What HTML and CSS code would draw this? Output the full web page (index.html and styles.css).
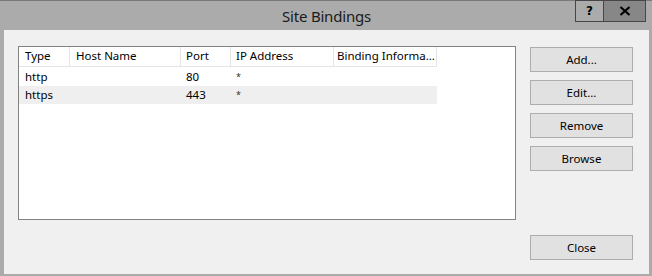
FILE: index.html
```html
<!DOCTYPE html>
<html>
<head>
<meta charset="utf-8">
<link rel="stylesheet" href="styles.css">
</head>
<body>
<div class="window">
  <div class="titlebar">
    <div class="title">Site Bindings</div>
    <div class="caption-buttons">
      <div class="cap-btn help">?</div>
      <div class="cap-btn close">
        <svg width="12" height="10" viewBox="0 0 12 10"><path d="M1.5 1 L10.5 9 M10.5 1 L1.5 9" stroke="#000" stroke-width="2.2"/></svg>
      </div>
    </div>
  </div>
  <div class="client">
    <div class="listview">
      <div class="row header">
        <div class="cell c1">Type</div>
        <div class="cell c2">Host Name</div>
        <div class="cell c3">Port</div>
        <div class="cell c4">IP Address</div>
        <div class="cell c5">Binding Informa...</div>
      </div>
      <div class="row item">
        <div class="cell c1">http</div>
        <div class="cell c2"></div>
        <div class="cell c3">80</div>
        <div class="cell c4"><span class="star">*</span></div>
        <div class="cell c5"></div>
      </div>
      <div class="row item alt">
        <div class="cell c1">https</div>
        <div class="cell c2"></div>
        <div class="cell c3">443</div>
        <div class="cell c4"><span class="star">*</span></div>
        <div class="cell c5"></div>
      </div>
    </div>
    <div class="buttons">
      <div class="btn-group">
        <button class="btn">Add...</button>
        <button class="btn">Edit...</button>
        <button class="btn">Remove</button>
        <button class="btn">Browse</button>
      </div>
      <button class="btn">Close</button>
    </div>
  </div>
</div>
</body>
</html>
```
FILE: styles.css
```css
html, body {
  margin: 0;
  padding: 0;
  background: #ababab;
}
body {
  font-family: "Noto Sans", "Open Sans", sans-serif;
  font-size: 11.5px;
  color: #000;
}
.window {
  width: 652px;
  height: 276px;
  box-sizing: border-box;
  background: #ababab;
  border-top: 1px solid #7a7a7a;
  padding: 0 3px 2px 4px;
  display: flex;
  flex-direction: column;
}
.titlebar {
  height: 29px;
  position: relative;
  display: flex;
  justify-content: center;
  align-items: center;
}
.title {
  font-size: 15px;
  color: #1a1a1a;
  margin-top: 1px;
  letter-spacing: -0.2px;
}
.caption-buttons {
  position: absolute;
  right: 3px;
  top: -1px;
  display: flex;
}
.cap-btn {
  height: 20px;
  box-sizing: content-box;
  border: 1px solid #474747;
  display: flex;
  align-items: center;
  justify-content: center;
  font-weight: bold;
  font-family: "DejaVu Sans", sans-serif;
  font-size: 12px;
}
.cap-btn.help {
  width: 27px;
  background: #ababab;
  border-right: none;
}
.cap-btn.close {
  width: 41px;
  background: #878787;
}
.client {
  flex: 1;
  background: #f0f0f0;
  display: flex;
  padding: 16px 16px 14px 14px;
  gap: 14px;
}
.listview {
  width: 496px;
  height: 172px;
  background: #fff;
  border: 1px solid #828282;
}
.row {
  display: flex;
  width: 418px;
}
.cell {
  box-sizing: border-box;
  white-space: nowrap;
  overflow: hidden;
}
.c1 { width: 51px; }
.c2 { width: 111px; }
.c3 { width: 50px; }
.c4 { width: 103px; }
.c5 { width: 103px; }
.header {
  height: 19px;
  border-bottom: 1px solid #e5e5e5;
  line-height: 18px;
}
.header .cell {
  border-right: 1px solid #e5e5e5;
  padding-left: 6px;
}
.header .c3 { padding-left: 5px; }
.header .c4 { padding-left: 5px; }
.header .c5 { padding-left: 3px; }
.item {
  height: 18px;
  line-height: 18px;
}
.item.alt { background: #efefef; }
.item .cell { padding-left: 6px; }
.item .c3 { padding-left: 5px; }
.item .c4 { padding-left: 5px; }
.star {
  font-size: 9px;
  vertical-align: 2px;
  color: #333;
}
.header + .item { margin-top: 1px; }
.buttons {
  display: flex;
  flex-direction: column;
  justify-content: space-between;
  padding-top: 1px;
}
.btn-group {
  display: flex;
  flex-direction: column;
  gap: 8px;
}
.btn {
  width: 103px;
  height: 25px;
  background: #e1e1e1;
  border: 1px solid #adadad;
  font-family: "Noto Sans", "Open Sans", sans-serif;
  font-size: 11.5px;
  color: #000;
  padding: 0;
  margin: 0;
  line-height: 22px;
}
```
